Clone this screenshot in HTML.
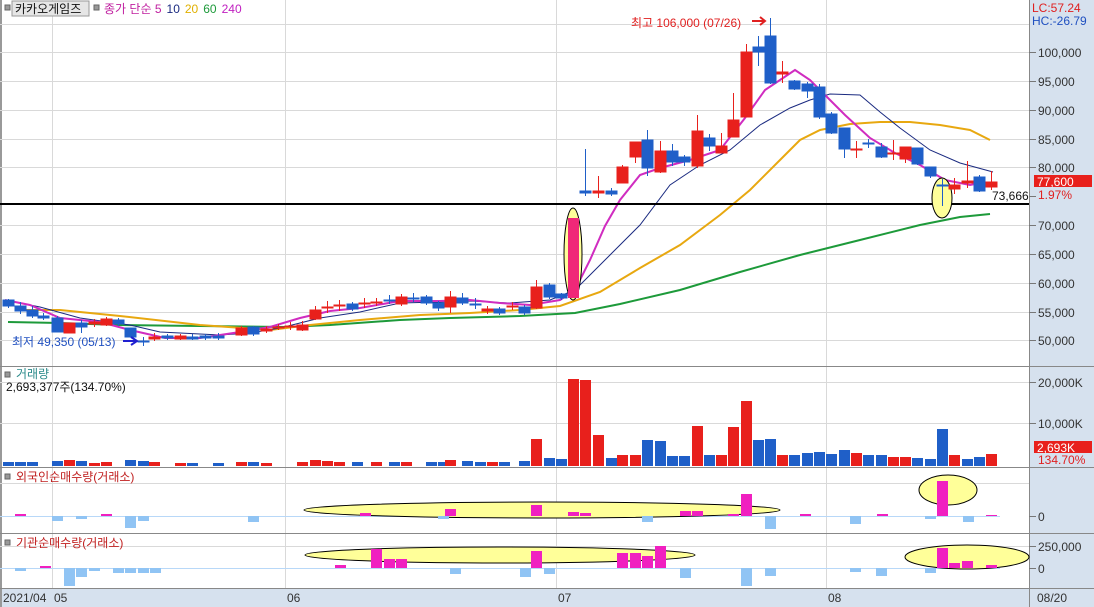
<!DOCTYPE html>
<html><head><meta charset="utf-8"><style>
body{margin:0;width:1094px;height:607px;overflow:hidden;background:#fff}
svg{display:block;font-family:"Liberation Sans","Noto Sans CJK KR",sans-serif;font-size:12px}
</style></head><body>
<svg width="1094" height="607" viewBox="0 0 1094 607" xmlns="http://www.w3.org/2000/svg">
<rect x="0" y="0" width="1094" height="607" fill="#fff"/>
<rect x="1029" y="0" width="65" height="607" fill="#d6e1ee"/>
<rect x="0" y="588" width="1094" height="19" fill="#d6e1ee"/>
<rect x="0" y="0" width="2" height="607" fill="#999"/>
<g stroke="#d9d9d9" stroke-width="1">
<line x1="0" x2="1029" y1="24.5" y2="24.5"/><line x1="0" x2="1029" y1="52.5" y2="52.5"/><line x1="0" x2="1029" y1="81.5" y2="81.5"/><line x1="0" x2="1029" y1="110.5" y2="110.5"/><line x1="0" x2="1029" y1="139.5" y2="139.5"/><line x1="0" x2="1029" y1="167.5" y2="167.5"/><line x1="0" x2="1029" y1="225.5" y2="225.5"/><line x1="0" x2="1029" y1="254.5" y2="254.5"/><line x1="0" x2="1029" y1="283.5" y2="283.5"/><line x1="0" x2="1029" y1="312.5" y2="312.5"/><line x1="0" x2="1029" y1="340.5" y2="340.5"/>
<line x1="0" x2="1029" y1="382.5" y2="382.5"/><line x1="0" x2="1029" y1="423.5" y2="423.5"/>
<line x1="0" x2="1029" y1="483.5" y2="483.5"/><line x1="0" x2="1029" y1="546.5" y2="546.5"/>
<line x1="52.5" x2="52.5" y1="0" y2="588"/><line x1="285.5" x2="285.5" y1="0" y2="588"/><line x1="556.5" x2="556.5" y1="0" y2="588"/><line x1="826.5" x2="826.5" y1="0" y2="588"/>
</g>
<g stroke="#888" stroke-width="1">
<line x1="0" x2="1094" y1="366.5" y2="366.5"/><line x1="0" x2="1094" y1="467.5" y2="467.5"/><line x1="0" x2="1094" y1="533.5" y2="533.5"/><line x1="0" x2="1094" y1="588.5" y2="588.5"/>
<line x1="1029.5" x2="1029.5" y1="0" y2="607"/>
</g>
<g stroke="#777"><line x1="1029" x2="1036" y1="52.5" y2="52.5"/><line x1="1029" x2="1036" y1="81.5" y2="81.5"/><line x1="1029" x2="1036" y1="110.5" y2="110.5"/><line x1="1029" x2="1036" y1="139.5" y2="139.5"/><line x1="1029" x2="1036" y1="167.5" y2="167.5"/><line x1="1029" x2="1036" y1="196.5" y2="196.5"/><line x1="1029" x2="1036" y1="225.5" y2="225.5"/><line x1="1029" x2="1036" y1="254.5" y2="254.5"/><line x1="1029" x2="1036" y1="283.5" y2="283.5"/><line x1="1029" x2="1036" y1="312.5" y2="312.5"/><line x1="1029" x2="1036" y1="340.5" y2="340.5"/><line x1="1029" x2="1036" y1="382.5" y2="382.5"/><line x1="1029" x2="1036" y1="423.5" y2="423.5"/><line x1="1029" x2="1036" y1="516.5" y2="516.5"/><line x1="1029" x2="1036" y1="546.5" y2="546.5"/><line x1="1029" x2="1036" y1="568.5" y2="568.5"/></g>
<g fill="#333">
<text x="1038" y="57">100,000</text><text x="1038" y="86">95,000</text><text x="1038" y="115">90,000</text><text x="1038" y="144">85,000</text><text x="1038" y="172">80,000</text><text x="1038" y="230">70,000</text><text x="1038" y="259">65,000</text><text x="1038" y="288">60,000</text><text x="1038" y="317">55,000</text><text x="1038" y="345">50,000</text>
<text x="1038" y="387">20,000K</text><text x="1038" y="428">10,000K</text><text x="1038" y="521">0</text><text x="1038" y="551">250,000</text><text x="1038" y="573">0</text>
</g>
<text x="1032" y="12" fill="#e02020">LC:57.24</text>
<text x="1032" y="25" fill="#2050c0">HC:-26.79</text>
<rect x="1034" y="175" width="58" height="12" fill="#e8201c"/>
<text x="1037" y="186" fill="#fff">77,600</text>
<text x="1038" y="199" fill="#e02020">1.97%</text>
<rect x="1034" y="441" width="58" height="12" fill="#e8201c"/>
<text x="1037" y="452" fill="#fff">2,693K</text>
<text x="1038" y="464" fill="#e02020">134.70%</text>
<polyline fill="none" stroke="#1d9a3a" stroke-width="2" points="8,322 60,323 120,325 200,326 285,327 330,325 400,320 450,318 520,316 575,313 620,304 680,290 740,272 800,255 860,240 920,225 960,217 990,214"/>
<polyline fill="none" stroke="#e8a810" stroke-width="2" points="22,310 60,310 120,316 200,325 270,330 310,325 360,320 420,315 470,313 520,310 560,306 600,292 640,268 680,245 720,215 750,190 780,160 800,140 820,130 850,124 880,122 910,122 940,125 970,130 990,140"/>
<polyline fill="none" stroke="#1a2a80" stroke-width="1" points="5,300 40,307 80,318 130,325 160,332 220,335 250,333 280,328 320,318 360,312 400,303 440,302 470,301 510,303 550,300 575,290 590,275 610,255 640,225 670,185 700,165 730,150 760,125 790,108 810,100 830,94 860,95 880,112 900,128 930,150 960,163 993,172"/>
<polyline fill="none" stroke="#d02cc0" stroke-width="2" points="5,300 30,305 60,318 100,322 130,330 165,338 200,338 240,332 270,327 300,318 330,311 360,308 400,301 440,301 470,300 500,303 530,305 560,300 575,290 590,260 605,226 620,200 640,175 660,168 690,160 720,150 745,118 765,90 795,70 810,80 825,95 845,115 870,138 895,153 920,165 945,180 970,185 985,182"/>
<rect x="0" y="203" width="1029" height="2" fill="#000"/>
<text x="992" y="200" fill="#111">73,666</text>
<ellipse cx="573" cy="254" rx="9" ry="46" fill="#ffff99" stroke="#000"/>
<ellipse cx="942" cy="198" rx="10" ry="20" fill="#ffff99" stroke="#000"/>
<g stroke="#1f5fc8" fill="#1f5fc8">
<line x1="8.5" x2="8.5" y1="299" y2="308"/><rect x="3" y="300" width="11" height="6"/>
<line x1="20.5" x2="20.5" y1="302" y2="314"/><rect x="15" y="306" width="11" height="5"/>
<line x1="32.5" x2="32.5" y1="306" y2="318"/><rect x="27" y="310" width="11" height="6"/>
<line x1="43.5" x2="43.5" y1="313" y2="320"/><rect x="38" y="316" width="11" height="2"/>
<line x1="57.5" x2="57.5" y1="316" y2="332"/><rect x="52" y="318" width="11" height="14"/>
<line x1="81.5" x2="81.5" y1="320" y2="333"/><rect x="76" y="323" width="11" height="4"/>
<line x1="118.5" x2="118.5" y1="318" y2="326"/><rect x="113" y="320" width="11" height="4"/>
<line x1="130.5" x2="130.5" y1="328" y2="337"/><rect x="125" y="328" width="11" height="9"/>
<line x1="143.5" x2="143.5" y1="337" y2="346"/><rect x="138" y="341" width="11" height="1"/>
<line x1="167.5" x2="167.5" y1="334" y2="340"/><rect x="162" y="336" width="11" height="2"/>
<line x1="192.5" x2="192.5" y1="334" y2="340"/><rect x="187" y="337" width="11" height="2"/>
<line x1="205.5" x2="205.5" y1="334" y2="340"/><rect x="200" y="336" width="11" height="2"/>
<line x1="218.5" x2="218.5" y1="333" y2="340"/><rect x="213" y="336" width="11" height="2"/>
<line x1="253.5" x2="253.5" y1="326" y2="336"/><rect x="248" y="327" width="11" height="7"/>
<line x1="352.5" x2="352.5" y1="302" y2="311"/><rect x="347" y="304" width="11" height="5"/>
<line x1="389.5" x2="389.5" y1="295" y2="304"/><rect x="384" y="300" width="11" height="1"/>
<line x1="413.5" x2="413.5" y1="293" y2="302"/><rect x="408" y="298" width="11" height="1"/>
<line x1="426.5" x2="426.5" y1="295" y2="305"/><rect x="421" y="297" width="11" height="6"/>
<line x1="438.5" x2="438.5" y1="301" y2="311"/><rect x="433" y="303" width="11" height="5"/>
<line x1="462.5" x2="462.5" y1="293" y2="305"/><rect x="457" y="298" width="11" height="5"/>
<line x1="475.5" x2="475.5" y1="298" y2="309"/><rect x="470" y="304" width="11" height="1"/>
<line x1="499.5" x2="499.5" y1="307" y2="315"/><rect x="494" y="309" width="11" height="4"/>
<line x1="524.5" x2="524.5" y1="305" y2="315"/><rect x="519" y="307" width="11" height="6"/>
<line x1="549.5" x2="549.5" y1="283" y2="299"/><rect x="544" y="285" width="11" height="12"/>
<line x1="561.5" x2="561.5" y1="293" y2="300"/><rect x="556" y="294" width="11" height="4"/>
<line x1="585.5" x2="585.5" y1="149" y2="196"/><rect x="580" y="191" width="11" height="2"/>
<line x1="611.5" x2="611.5" y1="188" y2="196"/><rect x="606" y="191" width="11" height="3"/>
<line x1="647.5" x2="647.5" y1="130" y2="176"/><rect x="642" y="140" width="11" height="28"/>
<line x1="672.5" x2="672.5" y1="144" y2="166"/><rect x="667" y="151" width="11" height="11"/>
<line x1="684.5" x2="684.5" y1="155" y2="166"/><rect x="679" y="157" width="11" height="5"/>
<line x1="709.5" x2="709.5" y1="134" y2="151"/><rect x="704" y="138" width="11" height="8"/>
<line x1="758.5" x2="758.5" y1="36" y2="66"/><rect x="753" y="47" width="11" height="5"/>
<line x1="770.5" x2="770.5" y1="18" y2="84"/><rect x="765" y="36" width="11" height="47"/>
<line x1="794.5" x2="794.5" y1="80" y2="90"/><rect x="789" y="81" width="11" height="8"/>
<line x1="807.5" x2="807.5" y1="82" y2="98"/><rect x="802" y="84" width="11" height="7"/>
<line x1="819.5" x2="819.5" y1="84" y2="119"/><rect x="814" y="87" width="11" height="30"/>
<line x1="831.5" x2="831.5" y1="112" y2="134"/><rect x="826" y="114" width="11" height="19"/>
<line x1="844.5" x2="844.5" y1="128" y2="158"/><rect x="839" y="128" width="11" height="21"/>
<line x1="868.5" x2="868.5" y1="139" y2="148"/><rect x="863" y="143" width="11" height="1"/>
<line x1="881.5" x2="881.5" y1="143" y2="158"/><rect x="876" y="147" width="11" height="10"/>
<line x1="917.5" x2="917.5" y1="148" y2="165"/><rect x="912" y="148" width="11" height="16"/>
<line x1="930.5" x2="930.5" y1="167" y2="178"/><rect x="925" y="167" width="11" height="9"/>
<line x1="942.5" x2="942.5" y1="179" y2="206"/><rect x="937" y="185" width="11" height="1"/>
<line x1="979.5" x2="979.5" y1="175" y2="192"/><rect x="974" y="177" width="11" height="14"/>
</g>
<g stroke="#e8201c" fill="#e8201c">
<line x1="69.5" x2="69.5" y1="323" y2="333"/><rect x="64" y="323" width="11" height="10"/>
<line x1="94.5" x2="94.5" y1="319" y2="327"/><rect x="89" y="322" width="11" height="2"/>
<line x1="106.5" x2="106.5" y1="317" y2="326"/><rect x="101" y="319" width="11" height="6"/>
<line x1="154.5" x2="154.5" y1="333" y2="341"/><rect x="149" y="337" width="11" height="2"/>
<line x1="180.5" x2="180.5" y1="334" y2="340"/><rect x="175" y="336" width="11" height="3"/>
<line x1="241.5" x2="241.5" y1="326" y2="336"/><rect x="236" y="328" width="11" height="7"/>
<line x1="266.5" x2="266.5" y1="326" y2="333"/><rect x="261" y="329" width="11" height="2"/>
<line x1="278.5" x2="278.5" y1="324" y2="330"/><rect x="273" y="327" width="11" height="1"/>
<line x1="290.5" x2="290.5" y1="322" y2="330"/><rect x="285" y="326" width="11" height="1"/>
<line x1="302.5" x2="302.5" y1="321" y2="331"/><rect x="297" y="325" width="11" height="5"/>
<line x1="315.5" x2="315.5" y1="306" y2="320"/><rect x="310" y="310" width="11" height="9"/>
<line x1="327.5" x2="327.5" y1="301" y2="313"/><rect x="322" y="307" width="11" height="1"/>
<line x1="339.5" x2="339.5" y1="300" y2="311"/><rect x="334" y="305" width="11" height="1"/>
<line x1="364.5" x2="364.5" y1="298" y2="308"/><rect x="359" y="303" width="11" height="1"/>
<line x1="376.5" x2="376.5" y1="298" y2="306"/><rect x="371" y="302" width="11" height="1"/>
<line x1="401.5" x2="401.5" y1="294" y2="306"/><rect x="396" y="297" width="11" height="7"/>
<line x1="450.5" x2="450.5" y1="291" y2="313"/><rect x="445" y="297" width="11" height="10"/>
<line x1="487.5" x2="487.5" y1="306" y2="314"/><rect x="482" y="309" width="11" height="2"/>
<line x1="512.5" x2="512.5" y1="302" y2="310"/><rect x="507" y="306" width="11" height="1"/>
<line x1="536.5" x2="536.5" y1="280" y2="309"/><rect x="531" y="287" width="11" height="21"/>
<line x1="598.5" x2="598.5" y1="176" y2="198"/><rect x="593" y="191" width="11" height="2"/>
<line x1="622.5" x2="622.5" y1="165" y2="183"/><rect x="617" y="167" width="11" height="16"/>
<line x1="635.5" x2="635.5" y1="142" y2="163"/><rect x="630" y="142" width="11" height="15"/>
<line x1="660.5" x2="660.5" y1="141" y2="173"/><rect x="655" y="151" width="11" height="21"/>
<line x1="697.5" x2="697.5" y1="115" y2="168"/><rect x="692" y="131" width="11" height="35"/>
<line x1="721.5" x2="721.5" y1="133" y2="153"/><rect x="716" y="146" width="11" height="7"/>
<line x1="733.5" x2="733.5" y1="93" y2="137"/><rect x="728" y="120" width="11" height="17"/>
<line x1="746.5" x2="746.5" y1="44" y2="117"/><rect x="741" y="52" width="11" height="65"/>
<line x1="782.5" x2="782.5" y1="61" y2="83"/><rect x="777" y="72" width="11" height="2"/>
<line x1="856.5" x2="856.5" y1="141" y2="158"/><rect x="851" y="149" width="11" height="1"/>
<line x1="893.5" x2="893.5" y1="140" y2="160"/><rect x="888" y="153" width="11" height="1"/>
<line x1="905.5" x2="905.5" y1="147" y2="163"/><rect x="900" y="147" width="11" height="12"/>
<line x1="954.5" x2="954.5" y1="178" y2="194"/><rect x="949" y="185" width="11" height="4"/>
<line x1="967.5" x2="967.5" y1="161" y2="188"/><rect x="962" y="181" width="11" height="2"/>
<line x1="991.5" x2="991.5" y1="171" y2="190"/><rect x="986" y="182" width="11" height="5"/>
</g>
<rect x="568" y="218" width="11" height="80" fill="#f02878"/>
<text x="631" y="27" fill="#e02020">최고 106,000 (07/26)</text>
<path d="M752 21 H764 M760 17 L765 21 L760 25" stroke="#e02020" stroke-width="2" fill="none"/>
<text x="12" y="346" fill="#2050c0">최저 49,350 (05/13)</text>
<path d="M123 341 H136 M131 337 L137 341 L131 345" stroke="#2020d0" stroke-width="2" fill="none"/>
<rect x="5" y="5" width="5" height="5" fill="#999" stroke="#666"/>
<rect x="12" y="1" width="77" height="15" fill="#e6e6e6" stroke="#999"/>
<text x="15" y="13" fill="#111">카카오게임즈</text>
<rect x="94" y="5" width="5" height="5" fill="#999" stroke="#666"/>
<text x="104" y="13"><tspan fill="#c020a0">종가 단순 5</tspan><tspan fill="#1a2a80" dx="5">10</tspan><tspan fill="#e0b000" dx="5">20</tspan><tspan fill="#1d9a3a" dx="5">60</tspan><tspan fill="#c020c0" dx="5">240</tspan></text>
<rect x="5" y="372" width="5" height="5" fill="#999" stroke="#666"/>
<text x="16" y="378" fill="#2a8a8a">거래량</text>
<text x="6" y="391" fill="#111">2,693,377주(134.70%)</text>
<g fill="#1f5fc8">
<rect x="3" y="462" width="11" height="4"/><rect x="15" y="462" width="11" height="4"/><rect x="27" y="462" width="11" height="4"/><rect x="52" y="461" width="11" height="5"/><rect x="76" y="461" width="11" height="5"/><rect x="125" y="460" width="11" height="6"/><rect x="138" y="461" width="11" height="5"/><rect x="187" y="463" width="11" height="3"/><rect x="213" y="463" width="11" height="3"/><rect x="248" y="462" width="11" height="4"/><rect x="352" y="462" width="11" height="4"/><rect x="389" y="462" width="11" height="4"/><rect x="426" y="462" width="11" height="4"/><rect x="438" y="462" width="11" height="4"/><rect x="462" y="461" width="11" height="5"/><rect x="475" y="462" width="11" height="4"/><rect x="499" y="462" width="11" height="4"/><rect x="519" y="461" width="11" height="5"/><rect x="544" y="458" width="11" height="8"/><rect x="556" y="459" width="11" height="7"/>
<rect x="606" y="458" width="11" height="8"/><rect x="642" y="440" width="11" height="26"/><rect x="655" y="441" width="11" height="25"/><rect x="667" y="456" width="11" height="10"/><rect x="679" y="456" width="11" height="10"/><rect x="704" y="455" width="11" height="11"/><rect x="753" y="440" width="11" height="26"/><rect x="765" y="439" width="11" height="27"/><rect x="789" y="455" width="11" height="11"/><rect x="802" y="453" width="11" height="13"/><rect x="814" y="452" width="11" height="14"/><rect x="826" y="454" width="11" height="12"/><rect x="839" y="450" width="11" height="16"/><rect x="863" y="455" width="11" height="11"/><rect x="876" y="455" width="11" height="11"/><rect x="912" y="458" width="11" height="8"/><rect x="925" y="459" width="11" height="7"/><rect x="937" y="429" width="11" height="37"/><rect x="962" y="459" width="11" height="7"/><rect x="974" y="457" width="11" height="9"/>
</g>
<g fill="#e8201c">
<rect x="64" y="460" width="11" height="6"/><rect x="89" y="463" width="11" height="3"/><rect x="101" y="462" width="11" height="4"/><rect x="149" y="462" width="11" height="4"/><rect x="175" y="463" width="11" height="3"/><rect x="236" y="462" width="11" height="4"/><rect x="261" y="463" width="11" height="3"/><rect x="297" y="462" width="11" height="4"/><rect x="310" y="460" width="11" height="6"/><rect x="322" y="461" width="11" height="5"/><rect x="334" y="462" width="11" height="4"/><rect x="371" y="462" width="11" height="4"/><rect x="401" y="462" width="11" height="4"/><rect x="445" y="460" width="11" height="6"/><rect x="487" y="462" width="11" height="4"/><rect x="531" y="439" width="11" height="27"/>
<rect x="568" y="379" width="11" height="87"/><rect x="580" y="380" width="11" height="86"/><rect x="593" y="435" width="11" height="31"/><rect x="617" y="455" width="11" height="11"/><rect x="630" y="455" width="11" height="11"/><rect x="692" y="426" width="11" height="40"/><rect x="716" y="455" width="11" height="11"/><rect x="728" y="427" width="11" height="39"/><rect x="741" y="401" width="11" height="65"/><rect x="777" y="455" width="11" height="11"/><rect x="851" y="453" width="11" height="13"/><rect x="888" y="457" width="11" height="9"/><rect x="900" y="457" width="11" height="9"/><rect x="949" y="455" width="11" height="11"/><rect x="986" y="454" width="11" height="12"/>
</g>
<rect x="5" y="474" width="5" height="5" fill="#999" stroke="#666"/>
<text x="16" y="481" fill="#c02020">외국인순매수량(거래소)</text>
<line x1="0" x2="1000" y1="516.5" y2="516.5" stroke="#b8d8f8"/>
<ellipse cx="542" cy="510" rx="238" ry="8" fill="#ffff99" stroke="#000"/>
<ellipse cx="948" cy="490" rx="29" ry="15" fill="#ffff99" stroke="#000"/>
<g fill="#90c4f4">
<rect x="52" y="516" width="11" height="5"/><rect x="76" y="516" width="11" height="3"/><rect x="125" y="516" width="11" height="12"/><rect x="138" y="516" width="11" height="5"/><rect x="248" y="516" width="11" height="6"/><rect x="438" y="516" width="11" height="3"/><rect x="642" y="516" width="11" height="6"/><rect x="765" y="516" width="11" height="13"/><rect x="850" y="516" width="11" height="8"/><rect x="963" y="516" width="11" height="6"/><rect x="925" y="516" width="11" height="3"/>
</g>
<g fill="#f020c0">
<rect x="15" y="514" width="11" height="2"/><rect x="101" y="514" width="11" height="2"/><rect x="360" y="513" width="11" height="3"/><rect x="445" y="509" width="11" height="7"/><rect x="531" y="505" width="11" height="11"/><rect x="568" y="512" width="11" height="4"/><rect x="580" y="513" width="11" height="3"/><rect x="680" y="511" width="11" height="5"/><rect x="692" y="511" width="11" height="5"/><rect x="741" y="494" width="11" height="22"/><rect x="728" y="514" width="11" height="2"/><rect x="800" y="514" width="11" height="2"/><rect x="877" y="514" width="11" height="2"/><rect x="937" y="481" width="11" height="35"/><rect x="986" y="515" width="11" height="1"/>
</g>
<rect x="5" y="540" width="5" height="5" fill="#999" stroke="#666"/>
<text x="16" y="547" fill="#c02020">기관순매수량(거래소)</text>
<line x1="0" x2="1000" y1="568.5" y2="568.5" stroke="#b8d8f8"/>
<ellipse cx="500" cy="555" rx="195" ry="8" fill="#ffff99" stroke="#000"/>
<ellipse cx="967" cy="557" rx="62" ry="12" fill="#ffff99" stroke="#000"/>
<g fill="#90c4f4">
<rect x="15" y="568" width="11" height="3"/><rect x="64" y="568" width="11" height="18"/><rect x="76" y="568" width="11" height="9"/><rect x="89" y="568" width="11" height="3"/><rect x="113" y="568" width="11" height="5"/><rect x="125" y="568" width="11" height="5"/><rect x="138" y="568" width="11" height="5"/><rect x="150" y="568" width="11" height="5"/><rect x="450" y="568" width="11" height="6"/><rect x="520" y="568" width="11" height="9"/><rect x="544" y="568" width="11" height="6"/><rect x="680" y="568" width="11" height="10"/><rect x="741" y="568" width="11" height="18"/><rect x="765" y="568" width="11" height="8"/><rect x="850" y="568" width="11" height="4"/><rect x="876" y="568" width="11" height="8"/><rect x="925" y="568" width="11" height="5"/>
</g>
<g fill="#f020c0">
<rect x="40" y="566" width="11" height="2"/><rect x="335" y="565" width="11" height="3"/><rect x="371" y="549" width="11" height="19"/><rect x="384" y="559" width="11" height="9"/><rect x="396" y="559" width="11" height="9"/><rect x="531" y="551" width="11" height="17"/><rect x="617" y="553" width="11" height="15"/><rect x="630" y="553" width="11" height="15"/><rect x="642" y="556" width="11" height="12"/><rect x="655" y="546" width="11" height="22"/><rect x="937" y="548" width="11" height="20"/><rect x="949" y="563" width="11" height="5"/><rect x="962" y="561" width="11" height="7"/><rect x="986" y="565" width="11" height="3"/>
</g>
<g fill="#333"><text x="3" y="602">2021/04</text><text x="54" y="602">05</text><text x="287" y="602">06</text><text x="558" y="602">07</text><text x="828" y="602">08</text><text x="1037" y="602">08/20</text></g>
</svg>
</body></html>
